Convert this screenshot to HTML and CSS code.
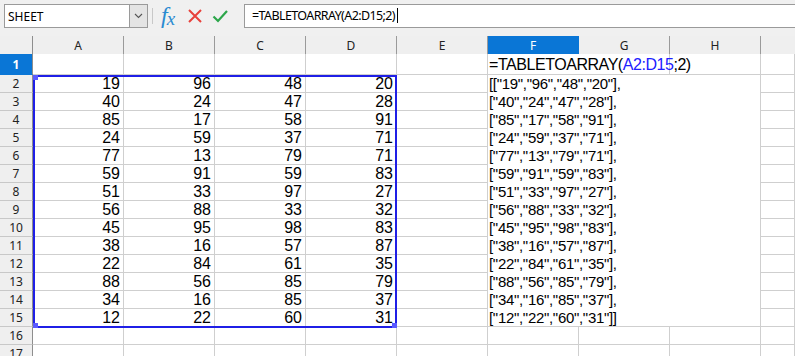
FILE: index.html
```html
<!DOCTYPE html>
<html>
<head>
<meta charset="utf-8">
<link rel="stylesheet" href="styles.css">
</head>
<body>
<div class="app">
  <div class="toolbar">
    <div class="namebox">
      <span class="name-text">SHEET</span>
      <span class="name-btn"><svg width="9" height="6" viewBox="0 0 9 6"><path d="M1 1 L4.5 4.5 L8 1" fill="none" stroke="#555" stroke-width="1.1"/></svg></span>
    </div>
    <div class="sep"></div>
    <span class="fx"><span class="fx-f">f</span><span class="fx-x">x</span></span>
    <svg class="icon-x" width="16" height="16" viewBox="0 0 16 16"><path d="M2 2 L14 14 M14 2 L2 14" stroke="#e8413b" stroke-width="2" fill="none"/></svg>
    <svg class="icon-ok" width="16" height="16" viewBox="0 0 16 16"><path d="M1.5 8.5 L6 13 L15 3" stroke="#2ca64a" stroke-width="2.2" fill="none"/></svg>
    <div class="formula-input">=TABLETOARRAY(A2:D15;2)<span class="caret"></span></div>
  </div>

  <div class="sheet">
    <div class="corner"></div>
    <div class="ch">A</div><div class="ch">B</div><div class="ch">C</div><div class="ch">D</div><div class="ch">E</div><div class="ch active">F</div><div class="ch">G</div><div class="ch">H</div><div class="ch last"></div>

    <div class="rh active r1">1</div>
    <div class="c r1"></div><div class="c r1"></div><div class="c r1"></div><div class="c r1"></div><div class="c r1"></div>
    <div class="c r1 formula-cell">=TABLETOARRAY(<span class="ref">A2:D15</span>;2)</div>
    <div class="c r1"></div><div class="c r1"></div>

    <div class="rh">2</div>
    <div class="block">
      <div class="n">19</div><div class="n">96</div><div class="n">48</div><div class="n">20</div>
      <div class="n">40</div><div class="n">24</div><div class="n">47</div><div class="n">28</div>
      <div class="n">85</div><div class="n">17</div><div class="n">58</div><div class="n">91</div>
      <div class="n">24</div><div class="n">59</div><div class="n">37</div><div class="n">71</div>
      <div class="n">77</div><div class="n">13</div><div class="n">79</div><div class="n">71</div>
      <div class="n">59</div><div class="n">91</div><div class="n">59</div><div class="n">83</div>
      <div class="n">51</div><div class="n">33</div><div class="n">97</div><div class="n">27</div>
      <div class="n">56</div><div class="n">88</div><div class="n">33</div><div class="n">32</div>
      <div class="n">45</div><div class="n">95</div><div class="n">98</div><div class="n">83</div>
      <div class="n">38</div><div class="n">16</div><div class="n">57</div><div class="n">87</div>
      <div class="n">22</div><div class="n">84</div><div class="n">61</div><div class="n">35</div>
      <div class="n">88</div><div class="n">56</div><div class="n">85</div><div class="n">79</div>
      <div class="n">34</div><div class="n">16</div><div class="n">85</div><div class="n">37</div>
      <div class="n">12</div><div class="n">22</div><div class="n">60</div><div class="n">31</div>
      <span class="handle tl"></span><span class="handle bl"></span><span class="handle br"></span>
    </div>
    <div class="c"></div>
    <div class="merged">[["19","96","48","20"],
["40","24","47","28"],
["85","17","58","91"],
["24","59","37","71"],
["77","13","79","71"],
["59","91","59","83"],
["51","33","97","27"],
["56","88","33","32"],
["45","95","98","83"],
["38","16","57","87"],
["22","84","61","35"],
["88","56","85","79"],
["34","16","85","37"],
["12","22","60","31"]]</div>
    <div class="c"></div>

    <div class="rh">3</div><div class="c"></div><div class="c"></div>
    <div class="rh">4</div><div class="c"></div><div class="c"></div>
    <div class="rh">5</div><div class="c"></div><div class="c"></div>
    <div class="rh">6</div><div class="c"></div><div class="c"></div>
    <div class="rh">7</div><div class="c"></div><div class="c"></div>
    <div class="rh">8</div><div class="c"></div><div class="c"></div>
    <div class="rh">9</div><div class="c"></div><div class="c"></div>
    <div class="rh">10</div><div class="c"></div><div class="c"></div>
    <div class="rh">11</div><div class="c"></div><div class="c"></div>
    <div class="rh">12</div><div class="c"></div><div class="c"></div>
    <div class="rh">13</div><div class="c"></div><div class="c"></div>
    <div class="rh">14</div><div class="c"></div><div class="c"></div>
    <div class="rh">15</div><div class="c"></div><div class="c"></div>

    <div class="rh">16</div>
    <div class="c"></div><div class="c"></div><div class="c"></div><div class="c"></div><div class="c"></div><div class="c"></div><div class="c"></div><div class="c"></div><div class="c"></div>
    <div class="rh">17</div>
    <div class="c"></div><div class="c"></div><div class="c"></div><div class="c"></div><div class="c"></div><div class="c"></div><div class="c"></div><div class="c"></div><div class="c"></div>
  </div>
</div>
</body>
</html>
```

FILE: styles.css
```css
* { box-sizing: border-box; }
html, body { margin: 0; padding: 0; background: #ffffff; overflow: hidden; }
.app { width: 795px; height: 356px; overflow: hidden; background: #f0f0f0; }

.toolbar {
  height: 36px;
  display: flex;
  align-items: flex-start;
  padding: 4px 0 0 4px;
  background: #f0f0f0;
}
.namebox {
  width: 144px; height: 24px;
  background: #fff;
  border: 1px solid #9a9a9a;
  display: flex; align-items: center; justify-content: space-between;
  font-family: "Noto Sans", sans-serif; font-size: 12px; color: #000;
}
.name-text { padding-left: 3px; }
.name-btn {
  width: 18px; height: 22px;
  background: #e4e4e4;
  border-left: 1px solid #9a9a9a;
  display: flex; align-items: center; justify-content: center;
}
.sep { width: 1px; height: 16px; background: #c8c8c8; margin: 4px 8px 0 4px; }
.fx {
  font-family: "Liberation Serif", serif; font-style: italic;
  color: #2a8ad0; font-size: 24px; line-height: 22px;
  width: 20px; white-space: nowrap;
}
.fx-x { font-size: 19px; position: relative; top: 2px; margin-left: -1px; }
.icon-x { margin: 4px 0 0 6px; }
.icon-ok { margin: 4px 0 0 9px; }
.formula-input {
  margin-left: 16px;
  flex: 1;
  height: 24px;
  background: #fff;
  border: 1px solid #9a9a9a; border-right: none;
  font-family: "Noto Sans", sans-serif; font-size: 12.5px; line-height: 22px;
  letter-spacing: -0.6px;
  padding-left: 7px; color: #000;
  white-space: nowrap;
}
.caret { display: inline-block; width: 1px; height: 15px; background: #000; vertical-align: -3px; margin-left: 2px; }

.sheet {
  display: grid;
  grid-template-columns: 33px repeat(8, 91px) 1fr;
  grid-template-rows: 18px 21px repeat(14, 18px) 18px 18px;
  background: #fff;
  font-family: "Liberation Sans", Arial, sans-serif;
  font-size: 16px;
}
.corner { background: #efefef; border-right: 1px solid #8e8e8e; }
.ch {
  background: #efefef;
  border-right: 1px solid #9a9a9a;
  font-family: "Noto Sans", sans-serif; font-size: 12px; color: #222;
  display: flex; align-items: center; justify-content: center;
  padding-top: 1px;
}
.ch.last { border-right: none; }
.ch.active { background: #0a76d6; color: #fff; border-right-color: #0a76d6; }
.rh {
  background: #efefef;
  border-right: 1px solid #8e8e8e;
  border-bottom: 1px solid #c8c8c8;
  font-family: "Noto Sans", sans-serif; font-size: 12px; color: #222;
  display: flex; align-items: center; justify-content: center;
}
.rh.active { background: #0a76d6; color: #fff; font-weight: bold; border-bottom-color: #0a76d6; }
.c { border-right: 1px solid #cfcfcf; border-bottom: 1px solid #cfcfcf; }
.formula-cell {
  grid-column: span 2;
  border-right: 1px solid #cfcfcf;
  white-space: nowrap; line-height: 18px; padding: 2px 0 0 1px;
  letter-spacing: -0.45px;
}
.ref { color: #2020ff; }

.block {
  grid-column: span 4; grid-row: span 14;
  display: grid;
  grid-template-columns: repeat(4, 91px);
  grid-template-rows: repeat(14, 18px);
  position: relative;
}
.block::after {
  content: ""; position: absolute; inset: 0 0 -1px 0;
  border: 2px solid #1f1fe6;
  pointer-events: none;
}
.n {
  border-right: 1px solid #cfcfcf; border-bottom: 1px solid #cfcfcf;
  text-align: right; line-height: 18px; padding-right: 3px;
}
.handle { position: absolute; width: 5px; height: 5px; background: #5a5aff; z-index: 2; }
.handle.tl { left: 0; top: 0; }
.handle.bl { left: 0; bottom: -1px; }
.handle.br { right: 0; bottom: -1px; }

.merged {
  grid-column: span 3; grid-row: span 14;
  border-right: 1px solid #cfcfcf; border-bottom: 1px solid #cfcfcf;
  white-space: pre; line-height: 18px; padding-left: 1px;
  font-size: 15px; letter-spacing: -0.3px;
}
```
